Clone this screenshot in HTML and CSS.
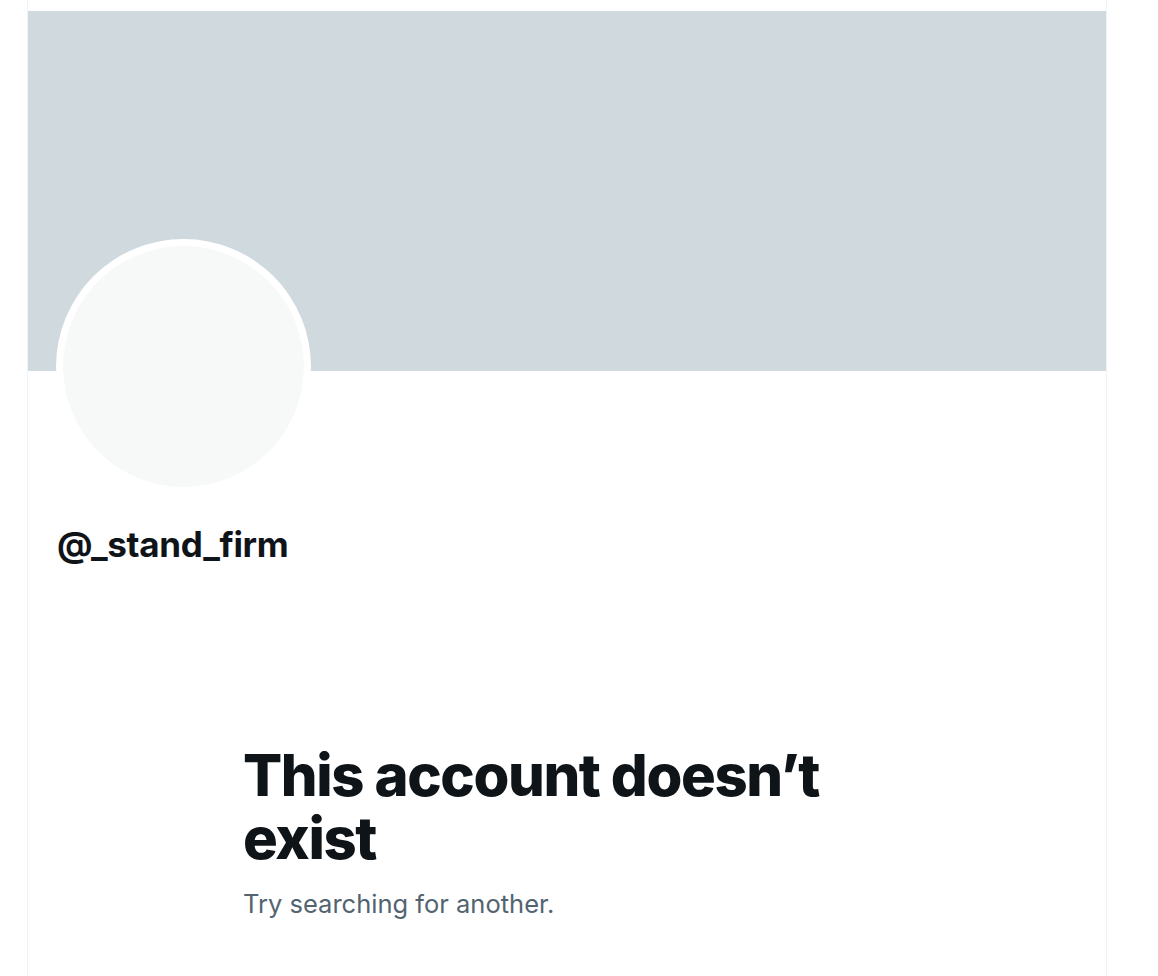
FILE: index.html
```html
<!DOCTYPE html>
<html lang="en">
<head>
<meta charset="utf-8">
<title>Profile</title>
<link rel="stylesheet" href="styles.css">
</head>
<body>
<main class="column">
  <div class="banner"></div>
  <div class="avatar"><div class="avatar-inner"></div></div>
  <div class="handle">@_stand_firm</div>
  <section class="empty">
    <h1 class="empty-title">This account doesn’t exist</h1>
    <p class="empty-sub">Try searching for another.</p>
  </section>
</main>
</body>
</html>
```

FILE: styles.css
```css
html, body {
  margin: 0;
  padding: 0;
  background: #ffffff;
}
body {
  font-family: Inter, "Noto Sans", "Liberation Sans", sans-serif;
  color: #0f1419;
}
.column {
  margin-left: 27px;
  width: 1078px;
  min-height: 976px;
  border-left: 1px solid #eff3f4;
  border-right: 1px solid #eff3f4;
  padding-top: 11px;
  box-sizing: content-box;
}
.banner {
  height: 360px;
  background: #cfd9de;
}
.avatar {
  margin-top: -132px;
  margin-left: 28px;
  width: 255px;
  height: 255px;
  border-radius: 50%;
  background: #ffffff;
  padding: 7px;
  box-sizing: border-box;
}
.avatar-inner {
  width: 100%;
  height: 100%;
  border-radius: 50%;
  background: #f7f9f9;
}
.handle {
  margin: 28px 0 0 29px;
  font-size: 35px;
  font-weight: 700;
  line-height: 44px;
  letter-spacing: -0.3px;
}
.empty {
  margin: 178px 0 0 215px;
  max-width: 600px;
}
.empty-title {
  margin: 0;
  font-size: 58px;
  font-weight: 800;
  line-height: 63px;
  letter-spacing: -1.4px;
}
.empty-sub {
  margin: 16px 0 0;
  font-size: 25.5px;
  line-height: 36px;
  color: #536471;
}
```
